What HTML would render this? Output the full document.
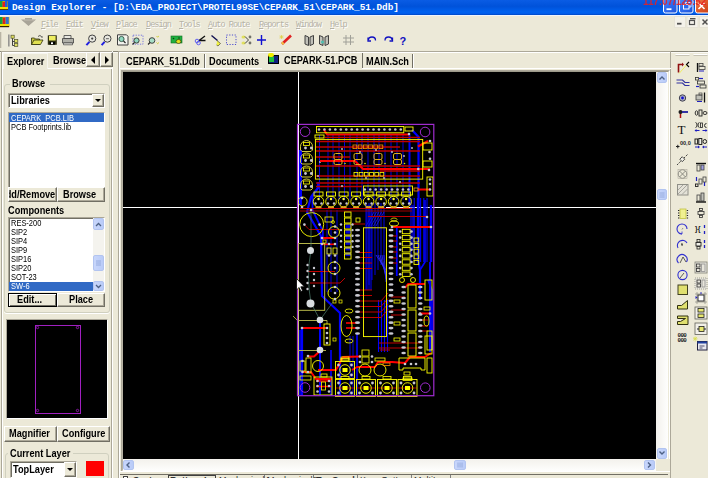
<!DOCTYPE html>
<html><head><meta charset="utf-8">
<style>
*{box-sizing:border-box}
body{margin:0;width:708px;height:478px;overflow:hidden;background:#ECE9D8;position:relative;font-family:"Liberation Sans",sans-serif;font-size:11px;color:#000}
.a{position:absolute}
.title{left:0;top:0;width:708px;height:16px;background:linear-gradient(#0a5ce4,#0052da 40%,#0062f0 75%,#005ae8 87%,#0042b8 94%,#0042b8 94%,#f0f4fc 94%);}
.ttxt{left:12px;top:2px;font-family:"Liberation Mono",monospace;font-weight:bold;font-size:9.36px;color:#fff;white-space:pre;line-height:12px}
.mi{top:19.5px;font-family:"Liberation Mono",monospace;font-size:8.5px;letter-spacing:-0.95px;color:#b5b2a6;text-shadow:1px 1px 0 #fff;line-height:11px;white-space:pre}
.b3{background:#ECE9D8;border:1px solid;border-color:#fff #716f64 #716f64 #fff;box-shadow:inset -1px -1px 0 #aca899}
.sk{background:#fff;border:1px solid;border-color:#aca899 #fff #fff #aca899;box-shadow:inset 1px 1px 0 #716f64}
.t{position:absolute;white-space:pre;transform-origin:0 0;line-height:12px}
.b10{font-weight:bold;font-size:10px;transform:scaleX(.92)}
.r9{font-size:9px;transform:scaleX(.83)}
.r10{font-size:10px;transform:scaleX(.93)}
.grp{position:absolute;border:1px solid #d0d0bf;border-radius:3px}
.xb{position:absolute;background:linear-gradient(90deg,#c8d6fb,#b9cbf8);border:1px solid #b2c4f0;border-radius:2px}
</style></head><body>
<!-- title bar -->
<div class="a title"></div>
<div class="a ttxt">Design Explorer - [D:\EDA_PROJECT\PROTEL99SE\CEPARK_51\CEPARK_51.Ddb]</div>

<!-- menu -->
<div class="a mi" style="left:41px"><u>F</u>ile</div>
<div class="a mi" style="left:66px"><u>E</u>dit</div>
<div class="a mi" style="left:91px"><u>V</u>iew</div>
<div class="a mi" style="left:116px"><u>P</u>lace</div>
<div class="a mi" style="left:146px"><u>D</u>esign</div>
<div class="a mi" style="left:179px"><u>T</u>ools</div>
<div class="a mi" style="left:208px"><u>A</u>uto Route</div>
<div class="a mi" style="left:259px"><u>R</u>eports</div>
<div class="a mi" style="left:296px"><u>W</u>indow</div>
<div class="a mi" style="left:330px"><u>H</u>elp</div>

<!--ICONS--><svg class="a" style="left:0;top:0" width="708" height="51"><rect x="0" y="1" width="8" height="9" fill="#d0a000"/><rect x="0" y="1" width="2.5" height="7" fill="#10a040"/><rect x="2.5" y="2" width="2.5" height="6" fill="#e02020"/><rect x="5" y="1" width="2.5" height="7" fill="#2060d0"/><rect x="0" y="7" width="8" height="2" fill="#f0e000"/><rect x="0" y="9" width="8" height="1" fill="#604000"/><rect x="0" y="17" width="9.5" height="10" fill="#e0c000"/><rect x="0" y="17" width="2.6" height="7" fill="#10a040"/><rect x="2.8" y="17.5" width="2.6" height="7" fill="#e02020"/><rect x="5.6" y="17" width="3.2" height="7" fill="#3070d0"/><rect x="0" y="24" width="9" height="2" fill="#f0e000"/><rect x="0" y="26" width="9" height="1.2" fill="#302000"/><path d="M21,19.5 h4 v-1.5 h7 v1.5 h4 l-7.5,6.5 z" fill="#a8a498"/><path d="M24,20 h10" stroke="#c8c4b8" stroke-width="0.8"/><defs><linearGradient id="bl" x1="0" y1="0" x2="1" y2="1"><stop offset="0" stop-color="#5a8ef5"/><stop offset=".5" stop-color="#2d6af0"/><stop offset="1" stop-color="#1e55d8"/></linearGradient><linearGradient id="rd" x1="0" y1="0" x2="1" y2="1"><stop offset="0" stop-color="#f08a60"/><stop offset=".5" stop-color="#e05a2a"/><stop offset="1" stop-color="#c84018"/></linearGradient></defs><path d="M663.5,-3 v14 q0,2 2,2 h9.5 q2,0 2,-2 v-14" fill="url(#bl)" stroke="#fff" stroke-width="1"/><rect x="666.5" y="8.3" width="5" height="1.8" fill="#fff"/><path d="M679.5,-3 v14 q0,2 2,2 h9.5 q2,0 2,-2 v-14" fill="url(#bl)" stroke="#fff" stroke-width="1"/><rect x="683.5" y="4.5" width="5.5" height="4.5" fill="none" stroke="#fff" stroke-width="1"/><path d="M685.5,4.5 v-2 h5.5 v4.5 h-2" fill="none" stroke="#fff" stroke-width="0.8"/><path d="M695.5,-3 v14 q0,2 2,2 h12 v-16" fill="url(#rd)" stroke="#fff" stroke-width="1"/><path d="M698.5,3 l6,6 M704.5,3 l-6,6" stroke="#fff" stroke-width="1.6"/><text x="643" y="4.5" font-family="Liberation Sans" font-weight="bold" font-size="10" fill="#e82020" letter-spacing="-0.1" opacity="0.85">117:07/128:52</text><rect x="674.5" y="16.5" width="11" height="11" fill="#f4f2ea" stroke="#e6e3d6" stroke-width="1"/><rect x="677" y="22.8" width="4.5" height="1.8" fill="#505050"/><rect x="687" y="16.5" width="11" height="11" fill="#f4f2ea" stroke="#e6e3d6" stroke-width="1"/><rect x="689.5" y="20.5" width="5" height="4" fill="none" stroke="#505050" stroke-width="1.2"/><rect x="690" y="18" width="5.5" height="1.4" fill="#505050"/><rect x="699.5" y="16.5" width="10" height="11" fill="#f4f2ea" stroke="#e6e3d6" stroke-width="1"/><path d="M702.5,19.5 l5,5 M707.5,19.5 l-5,5" stroke="#505050" stroke-width="1.5"/><rect x="0" y="32" width="1.3" height="16" fill="#b8b4a4"/><rect x="8.2" y="34.5" width="1.3" height="12" fill="#808080"/><path d="M12.5,38 v7.5 h3.5 M12.5,41.5 h3.5" stroke="#303030" stroke-width="0.9" fill="none"/><rect x="11" y="35.2" width="3.2" height="3" fill="#e0e060" stroke="#505030" stroke-width="0.7"/><rect x="14.6" y="39.6" width="3.2" height="3" fill="#e0e060" stroke="#505030" stroke-width="0.7"/><rect x="14.6" y="43.6" width="3.2" height="2.8" fill="#e0e060" stroke="#505030" stroke-width="0.7"/><path d="M31.5,38 h3 l1,1 h4 v5.5 h-8 z" fill="#c8c840" stroke="#303010" stroke-width="0.8"/><path d="M31.5,44.5 l2.5,-4.5 h9 l-2.5,4.5 z" fill="#e0e050" stroke="#303010" stroke-width="0.8"/><path d="M38,36.5 q2,-2 3.5,0" stroke="#303030" stroke-width="0.8" fill="none"/><circle cx="42" cy="37" r=".7" fill="#303030"/><rect x="47.8" y="35.3" width="9" height="9.5" fill="#303010"/><rect x="49" y="36" width="6.6" height="4.5" fill="#eeee60"/><rect x="49.5" y="41.8" width="5.5" height="2.8" fill="#000"/><rect x="51" y="42.3" width="2" height="1.8" fill="#fff"/><path d="M64,35.5 h7 v3 h-7 z" fill="#e8e8e0" stroke="#404040" stroke-width="0.8"/><path d="M62.5,38.5 h11 v4.5 h-11 z" fill="#b0b0a8" stroke="#404040" stroke-width="0.8"/><path d="M63.5,43 h9 v1.8 h-9 z" fill="#f0f0e8" stroke="#404040" stroke-width="0.7"/><circle cx="92.2" cy="38.6" r="3.6" fill="#e8e8e0" stroke="#404040" stroke-width="1"/><line x1="89.4" y1="41.8" x2="86.4" y2="45.2" stroke="#2020e0" stroke-width="2"/><circle cx="92.2" cy="38.6" r="1.1" fill="#404040"/><circle cx="107.4" cy="38.6" r="3.6" fill="#e8e8e0" stroke="#404040" stroke-width="1"/><line x1="104.60000000000001" y1="41.8" x2="101.60000000000001" y2="45.2" stroke="#2020e0" stroke-width="2"/><rect x="105.9" y="38.2" width="3" height="1" fill="#606060"/><path d="M117.5,34.8 h9 l1.5,1.5 v8.7 h-10.5 z" fill="#f4f4ee" stroke="#404040" stroke-width="1"/><circle cx="121.5" cy="39" r="2.6" fill="#90d8c0" stroke="#305040" stroke-width="0.9"/><line x1="123.5" y1="41" x2="125.5" y2="43" stroke="#202020" stroke-width="1.1"/><rect x="133" y="35.2" width="10" height="9" fill="none" stroke="#7070e0" stroke-width="0.9" stroke-dasharray="1.3,1.3"/><circle cx="136.5" cy="40.5" r="2.6" fill="#90d8c0" stroke="#303030" stroke-width="0.9"/><line x1="134.5" y1="42.5" x2="132.5" y2="44.5" stroke="#202020" stroke-width="1.1"/><circle cx="152" cy="40.5" r="2.8" fill="#a8e0c8" stroke="#303030" stroke-width="0.9"/><line x1="150" y1="42.5" x2="148" y2="44.5" stroke="#202020" stroke-width="1.1"/><path d="M156.5,36 l1.2,1.2 l1.2,-1.2 M156.5,42.5 l1.2,1.2 l1.2,-1.2" stroke="#d0d030" stroke-width="1" fill="none"/><rect x="171" y="36" width="11" height="7" fill="#20b040" stroke="#107020" stroke-width="0.6"/><circle cx="173.5" cy="38.5" r=".8" fill="#084010"/><circle cx="179" cy="38" r=".8" fill="#084010"/><ellipse cx="178.5" cy="41.5" rx="2.5" ry="2" fill="#e0e020" stroke="#303000" stroke-width="0.6"/><path d="M199,40.5 l6,-4.5 M199,40.5 h6.5" stroke="#101010" stroke-width="1.3"/><circle cx="197" cy="41" r="1.8" fill="none" stroke="#6060f0" stroke-width="1"/><circle cx="198.5" cy="43" r="1.8" fill="none" stroke="#6060f0" stroke-width="1"/><path d="M211.5,35.5 l6,5" stroke="#101050" stroke-width="1.4"/><path d="M217,40.5 l3.5,3 l-2.5,2.5 l-1.5,-1" stroke="#303030" stroke-width=".6" fill="#f0f040"/><rect x="226.5" y="35" width="9.5" height="9.5" fill="none" stroke="#5050d0" stroke-width="1" stroke-dasharray="1.2,1.5"/><ellipse cx="243.5" cy="37" rx="2" ry="1.6" fill="#e0e060"/><ellipse cx="243.5" cy="43" rx="2" ry="1.6" fill="#e0e060"/><path d="M245,36.5 l3.5,3.5 l-3.5,3.5" stroke="#303030" stroke-width=".9" fill="none"/><circle cx="250" cy="37" r="1.4" fill="#707068"/><circle cx="250" cy="43" r="1.4" fill="#707068"/><path d="M261.5,35 v10 M257,40 h9" stroke="#1010d0" stroke-width="1.4"/><path d="M282,44 l9,-8.5" stroke="#e02020" stroke-width="2.6"/><path d="M282,44 l1.5,-1.5" stroke="#f0c040" stroke-width="2.6"/><path d="M279.5,37 h4 M281.5,35 v4 M280,35.5 l3,3 M283,35.5 l-3,3" stroke="#e0d040" stroke-width=".7"/><path d="M305,35.5 l3.5,1.5 l0,8.5 l-3.5,-1.5 z M313.5,35.5 l-3.5,1.5 l0,8.5 l3.5,-1.5 z" fill="#c0c0b8" stroke="#303030" stroke-width=".9"/><path d="M319.5,35.5 l3.5,1.5 l0,8.5 l-3.5,-1.5 z M328.5,35.5 l-3.5,1.5 l0,8.5 l3.5,-1.5 z" fill="#c0c0b8" stroke="#303030" stroke-width=".9"/><circle cx="322.5" cy="42" r="1.6" fill="#50c0b0"/><path d="M346,35 v10 M350.5,35 v10 M343,38 h11 M343,42 h11" stroke="#a0a098" stroke-width="1"/><path d="M368.5,40 q0,-3 3.5,-3 q3.5,0 3.5,3.5 M368,37.5 v3.5 h3" stroke="#1010c0" stroke-width="1.3" fill="none"/><path d="M392,40 q0,-3 -3.5,-3 q-3.5,0 -3.5,3.5 M392.5,37.5 v3.5 h-3" stroke="#1010c0" stroke-width="1.3" fill="none"/><text x="399.5" y="45" font-family="Liberation Sans" font-weight="bold" font-size="11" fill="#1010c0">?</text></svg><!--/ICONS-->
<!-- toolbar bottom line -->
<div class="a" style="left:0;top:51px;width:708px;height:1px;background:#8a8778"></div>
<div class="a" style="left:0;top:52px;width:708px;height:1px;background:#fbfaf6"></div>

<!-- ============ left panel ============ -->
<div class="a" style="left:1px;top:51px;width:112px;height:427px;border-left:1px solid #aca899;border-top:1px solid #aca899;box-shadow:inset 1px 1px 0 #fff"></div>
<div class="a" style="left:111px;top:68px;width:1px;height:410px;background:#aca899"></div>
<div class="a" style="left:112px;top:51px;width:1px;height:427px;background:#fff"></div>
<!-- tabs -->
<div class="a" style="left:3px;top:53px;width:45px;height:16px;border:1px solid #f6f5ef;border-bottom:none"></div>
<div class="t b10" style="left:7px;top:56px">Explorer</div>
<div class="t b10" style="left:53px;top:55px;width:36px;overflow:hidden">Browse</div>
<div class="a" style="left:48px;top:68px;width:64px;height:1px;background:#fff"></div>
<div class="a b3" style="left:86px;top:52px;width:14px;height:15px"></div>
<div class="a b3" style="left:100px;top:52px;width:13px;height:15px"></div>
<div class="a" style="left:91px;top:56px;width:0;height:0;border-top:4px solid transparent;border-bottom:4px solid transparent;border-right:4px solid #000"></div>
<div class="a" style="left:105px;top:56px;width:0;height:0;border-top:4px solid transparent;border-bottom:4px solid transparent;border-left:4px solid #000"></div>

<!-- Browse group -->
<div class="grp" style="left:4px;top:84px;width:106px;height:229px;border-color:#d0d0bf;box-shadow:0 1px 0 #fff"></div>
<div class="a" style="left:10px;top:78px;width:40px;height:10px;background:#ECE9D8"></div>
<div class="t b10" style="left:12px;top:78px">Browse</div>
<div class="a sk" style="left:8px;top:93px;width:97px;height:15px"></div>
<div class="t b10" style="left:11px;top:95px">Libraries</div>
<div class="a b3" style="left:92px;top:94px;width:12px;height:13px"></div>
<div class="a" style="left:95px;top:99px;width:0;height:0;border-left:3px solid transparent;border-right:3px solid transparent;border-top:3px solid #000"></div>
<div class="a sk" style="left:8px;top:112px;width:97px;height:76px"></div>
<div class="a" style="left:9px;top:113px;width:95px;height:9px;background:#316ac5"></div>
<div class="t r9" style="left:11px;top:111.5px;color:#fff">CEPARK_PCB.LIB</div>
<div class="t r9" style="left:11px;top:120.5px">PCB Footprints.lib</div>
<div class="a b3" style="left:8px;top:187px;width:49px;height:15px;overflow:hidden"><div class="t b10" style="left:-10.5px;top:1px">Add/Remove</div></div>
<div class="a b3" style="left:57px;top:187px;width:48px;height:15px"></div>
<div class="t b10" style="left:63px;top:189px">Browse</div>

<!-- Components -->
<div class="t b10" style="left:8px;top:205px">Components</div>
<div class="a sk" style="left:8px;top:217px;width:97px;height:75px"></div>
<div class="t r9" style="left:11px;top:217px">RES-200</div>
<div class="t r9" style="left:11px;top:226px">SIP2</div>
<div class="t r9" style="left:11px;top:235px">SIP4</div>
<div class="t r9" style="left:11px;top:244px">SIP9</div>
<div class="t r9" style="left:11px;top:253px">SIP16</div>
<div class="t r9" style="left:11px;top:262px">SIP20</div>
<div class="t r9" style="left:11px;top:271px">SOT-23</div>
<div class="a" style="left:9px;top:282px;width:84px;height:9px;background:#316ac5"></div>
<div class="t r9" style="left:11px;top:280px;color:#fff">SW-6</div>
<div class="a" style="left:93px;top:218px;width:11px;height:73px;background:#f4f3ee"></div>
<div class="xb" style="left:93px;top:218px;width:11px;height:12px"></div>
<div class="xb" style="left:93px;top:255px;width:11px;height:16px"></div>
<div class="xb" style="left:93px;top:281px;width:11px;height:10px"></div>
<!-- buttons -->
<div class="a b3" style="left:8px;top:293px;width:49px;height:14px;border:1px solid #000;box-shadow:inset 1px 1px 0 #fff,inset -1px -1px 0 #716f64"></div>
<div class="t b10" style="left:17px;top:294px">Edit...</div>
<div class="a b3" style="left:57px;top:293px;width:48px;height:14px"></div>
<div class="t b10" style="left:69px;top:294px">Place</div>

<!-- separator + mini view -->

<div class="a" style="left:6px;top:319px;width:102px;height:100px;border:1px solid;border-color:#aca899 #fff #fff #aca899;background:#000"></div>
<svg class="a" style="left:0;top:0" width="112" height="478">
<rect x="35.5" y="325.5" width="45" height="88" fill="none" stroke="#a020c0" stroke-width="1"/>
<circle cx="37.5" cy="327.5" r="1.2" fill="none" stroke="#a020c0" stroke-width=".8"/>
<circle cx="77.5" cy="327.5" r="1.2" fill="none" stroke="#a020c0" stroke-width=".8"/>
<circle cx="37.5" cy="410.5" r="1.2" fill="none" stroke="#a020c0" stroke-width=".8"/>
<circle cx="77.5" cy="410.5" r="1.2" fill="none" stroke="#a020c0" stroke-width=".8"/>
</svg>
<div class="a b3" style="left:4px;top:426px;width:53px;height:16px"></div>
<div class="t b10" style="left:9px;top:428px">Magnifier</div>
<div class="a b3" style="left:57px;top:426px;width:53px;height:16px"></div>
<div class="t b10" style="left:62px;top:428px">Configure</div>
<!-- current layer -->
<div class="grp" style="left:5px;top:453px;width:104px;height:40px"></div>
<div class="a" style="left:8px;top:447px;width:65px;height:10px;background:#ECE9D8"></div>
<div class="t b10" style="left:10px;top:448px">Current Layer</div>
<div class="a sk" style="left:10px;top:461px;width:67px;height:17px"></div>
<div class="t b10" style="left:13px;top:464px">TopLayer</div>
<div class="a b3" style="left:64px;top:462px;width:12px;height:15px"></div>
<div class="a" style="left:67px;top:468px;width:0;height:0;border-left:3px solid transparent;border-right:3px solid transparent;border-top:3px solid #000"></div>
<div class="a" style="left:86px;top:461px;width:18px;height:15px;background:#f00"></div>

<!-- ============ document frame ============ -->
<div class="a" style="left:118px;top:51px;width:553px;height:427px;border-left:1px solid #aca899;border-top:1px solid #aca899"></div>
<div class="a" style="left:119px;top:52px;width:1px;height:426px;background:#fff"></div>
<div class="a" style="left:120px;top:52px;width:551px;height:1px;background:#fff"></div>
<div class="a" style="left:670px;top:51px;width:1px;height:427px;background:#aca899"></div>
<!-- tabs -->
<div class="t b10" style="left:126px;top:56px">CEPARK_51.Ddb</div>
<div class="a" style="left:204px;top:54px;width:1px;height:14px;background:#716f64"></div>
<div class="a" style="left:205px;top:54px;width:1px;height:14px;background:#fff"></div>
<div class="t b10" style="left:209px;top:56px">Documents</div>
<div class="a" style="left:120px;top:68px;width:142px;height:1px;background:#fff"></div>
<div class="a" style="left:362px;top:68px;width:309px;height:1px;background:#fff"></div>
<div class="t b10" style="left:284px;top:54.5px">CEPARK-51.PCB</div>
<div class="a" style="left:362px;top:53px;width:1px;height:15px;background:#716f64"></div>
<div class="t b10" style="left:366px;top:56px">MAIN.Sch</div>
<div class="a" style="left:412px;top:54px;width:1px;height:14px;background:#716f64"></div>
<div class="a" style="left:413px;top:54px;width:1px;height:14px;background:#fff"></div>
<!-- pcb tab icon -->
<div class="a" style="left:268px;top:55px;width:11px;height:9px;background:#102080;border:1px solid #000"></div>
<div class="a" style="left:269px;top:57px;width:5px;height:5px;background:#20c040"></div>
<div class="a" style="left:268px;top:53px;width:6px;height:4px;background:#f0f000;border-radius:2px"></div>

<!-- canvas frame -->
<div class="a" style="left:121px;top:70px;width:549px;height:402px;border:1px solid;border-color:#aca899 #fff #fff #aca899"></div>
<div class="a" style="left:122px;top:71px;width:547px;height:400px;border:1px solid;border-color:#9d9a8a #ECE9D8 #ECE9D8 #b8b4a4"></div>
<div class="a" style="left:123px;top:72px;width:533px;height:387px;background:#000;overflow:hidden" id="cv"></div>
<!--PCB--><svg class="a" style="left:123px;top:72px" width="533" height="387" viewBox="123 72 533 387"><line x1="298.5" y1="72" x2="298.5" y2="459" stroke="#fff" stroke-width="1"/><line x1="123" y1="207.5" x2="298" y2="207.5" stroke="#fff" stroke-width="1"/><line x1="386" y1="207.5" x2="656" y2="207.5" stroke="#fff" stroke-width="1"/><g><polyline points="366,203 366,290" fill="none" stroke="#0000ff" stroke-width="0.9" stroke-linejoin="round"/><polyline points="369,203 369,285" fill="none" stroke="#0000ff" stroke-width="0.9" stroke-linejoin="round"/><polyline points="372,203 372,280" fill="none" stroke="#0000ff" stroke-width="0.9" stroke-linejoin="round"/><polyline points="375,203 375,275" fill="none" stroke="#0000ff" stroke-width="0.9" stroke-linejoin="round"/><polyline points="378,203 378,270" fill="none" stroke="#0000ff" stroke-width="0.9" stroke-linejoin="round"/><polyline points="381,203 381,265" fill="none" stroke="#0000ff" stroke-width="0.9" stroke-linejoin="round"/><polyline points="384,203 384,260" fill="none" stroke="#0000ff" stroke-width="0.9" stroke-linejoin="round"/><line x1="411.0" y1="198" x2="411.0" y2="262" stroke="#0000ff" stroke-width="1.1"/><line x1="414.2" y1="198" x2="414.2" y2="262" stroke="#0000ff" stroke-width="1.1"/><line x1="417.4" y1="198" x2="417.4" y2="262" stroke="#0000ff" stroke-width="1.1"/><line x1="420.6" y1="198" x2="420.6" y2="262" stroke="#0000ff" stroke-width="1.1"/><line x1="423.8" y1="198" x2="423.8" y2="262" stroke="#0000ff" stroke-width="1.1"/><line x1="427.0" y1="198" x2="427.0" y2="262" stroke="#0000ff" stroke-width="1.1"/><line x1="378.5" y1="300" x2="378.5" y2="352" stroke="#0000ff" stroke-width="1.1"/><line x1="381.5" y1="300" x2="381.5" y2="352" stroke="#0000ff" stroke-width="1.1"/><line x1="384.5" y1="300" x2="384.5" y2="352" stroke="#0000ff" stroke-width="1.1"/><line x1="387.5" y1="300" x2="387.5" y2="352" stroke="#0000ff" stroke-width="1.1"/><polyline points="384.0,212 376.0,226" fill="none" stroke="#2020e0" stroke-width="0.8" stroke-linejoin="round"/><polyline points="381.5,212 373.5,226" fill="none" stroke="#2020e0" stroke-width="0.8" stroke-linejoin="round"/><polyline points="379.0,212 371.0,226" fill="none" stroke="#2020e0" stroke-width="0.8" stroke-linejoin="round"/><polyline points="376.5,212 368.5,226" fill="none" stroke="#2020e0" stroke-width="0.8" stroke-linejoin="round"/><polyline points="374.0,212 366.0,226" fill="none" stroke="#2020e0" stroke-width="0.8" stroke-linejoin="round"/><line x1="319.5" y1="135" x2="319.5" y2="200" stroke="#0000e0" stroke-width="1"/><line x1="328" y1="135" x2="328" y2="200" stroke="#0000e0" stroke-width="1"/><line x1="333" y1="135" x2="333" y2="200" stroke="#0000e0" stroke-width="1"/><line x1="339" y1="135" x2="339" y2="200" stroke="#0000e0" stroke-width="1"/><line x1="344.5" y1="135" x2="344.5" y2="200" stroke="#0000e0" stroke-width="1"/><line x1="350" y1="135" x2="350" y2="200" stroke="#0000e0" stroke-width="1"/><line x1="357" y1="135" x2="357" y2="200" stroke="#0000e0" stroke-width="1"/><line x1="362" y1="135" x2="362" y2="200" stroke="#0000e0" stroke-width="1"/><line x1="368" y1="135" x2="368" y2="200" stroke="#0000e0" stroke-width="1"/><line x1="374" y1="135" x2="374" y2="200" stroke="#0000e0" stroke-width="1"/><line x1="379" y1="135" x2="379" y2="200" stroke="#0000e0" stroke-width="1"/><line x1="385" y1="135" x2="385" y2="200" stroke="#0000e0" stroke-width="1"/><line x1="391" y1="135" x2="391" y2="200" stroke="#0000e0" stroke-width="1"/><line x1="397" y1="135" x2="397" y2="200" stroke="#0000e0" stroke-width="1"/><line x1="403" y1="135" x2="403" y2="200" stroke="#0000e0" stroke-width="1"/><line x1="300.5" y1="150" x2="300.5" y2="205" stroke="#0000ff" stroke-width="3"/><polyline points="412,130 418.5,137 418.5,262 420,270 420,300" fill="none" stroke="#0000ff" stroke-width="2.2" stroke-linejoin="round"/><line x1="409.5" y1="135" x2="409.5" y2="205" stroke="#0000ff" stroke-width="2"/><line x1="431" y1="205" x2="431" y2="262" stroke="#0000ff" stroke-width="2.4"/><polyline points="425,200 425,262 420,270" fill="none" stroke="#0000ff" stroke-width="1.6" stroke-linejoin="round"/><line x1="413" y1="205" x2="413" y2="250" stroke="#0000ff" stroke-width="1.2"/><line x1="396.8" y1="227" x2="396.8" y2="276" stroke="#0000ff" stroke-width="1.8"/><polyline points="318,182 318,188 311,197 307,212 321,236 322,296 340,313 340,395" fill="none" stroke="#0000ff" stroke-width="2.2" stroke-linejoin="round"/><polyline points="312.5,196 312.5,210 322.8,231 322.8,240" fill="none" stroke="#0000ff" stroke-width="1.8" stroke-linejoin="round"/><rect x="345.5" y="224.5" width="5.5" height="3.5" fill="#0000d0"/><rect x="345.5" y="230.1" width="5.5" height="3.5" fill="#0000d0"/><rect x="345.5" y="235.7" width="5.5" height="3.5" fill="#0000d0"/><rect x="345.5" y="241.3" width="5.5" height="3.5" fill="#0000d0"/><rect x="345.5" y="246.9" width="5.5" height="3.5" fill="#0000d0"/><rect x="345.5" y="252.5" width="5.5" height="3.5" fill="#0000d0"/><line x1="302" y1="328" x2="302" y2="395" stroke="#0000ff" stroke-width="2.2"/><line x1="320" y1="320" x2="320" y2="395" stroke="#0000ff" stroke-width="2"/><line x1="331" y1="350" x2="331" y2="395" stroke="#0000ff" stroke-width="1.6"/><line x1="357" y1="333" x2="357" y2="395" stroke="#0000ff" stroke-width="1.6"/><polyline points="428,280 432,290 432,350" fill="none" stroke="#0000ff" stroke-width="1.8" stroke-linejoin="round"/><polyline points="367,290 367,205" fill="none" stroke="#0000ff" stroke-width="1" stroke-linejoin="round"/><polyline points="369,290 369,205" fill="none" stroke="#0000ff" stroke-width="1" stroke-linejoin="round"/><polyline points="371,290 371,205" fill="none" stroke="#0000ff" stroke-width="1" stroke-linejoin="round"/><polyline points="376,255 386,270" fill="none" stroke="#3030ff" stroke-width="0.8" stroke-linejoin="round"/><polyline points="378,255 386,273" fill="none" stroke="#3030ff" stroke-width="0.8" stroke-linejoin="round"/><polyline points="380,255 386,276" fill="none" stroke="#3030ff" stroke-width="0.8" stroke-linejoin="round"/><polyline points="382,255 386,279" fill="none" stroke="#3030ff" stroke-width="0.8" stroke-linejoin="round"/><polyline points="384,255 386,282" fill="none" stroke="#3030ff" stroke-width="0.8" stroke-linejoin="round"/><line x1="430" y1="262" x2="430" y2="352" stroke="#0000ff" stroke-width="2"/><line x1="327" y1="210" x2="327" y2="292" stroke="#0000e0" stroke-width="1"/><line x1="331" y1="210" x2="331" y2="292" stroke="#0000e0" stroke-width="1"/><line x1="337" y1="210" x2="337" y2="292" stroke="#0000e0" stroke-width="1"/><line x1="350" y1="336" x2="350" y2="395" stroke="#0000e0" stroke-width="1"/><line x1="353" y1="336" x2="353" y2="395" stroke="#0000e0" stroke-width="1"/><line x1="300" y1="330" x2="300" y2="395" stroke="#0000ff" stroke-width="1.5"/><polyline points="323.8,129.5 327,134.5 409,134.5" fill="none" stroke="#ff0000" stroke-width="2" stroke-linejoin="round"/><line x1="325" y1="137.3" x2="420" y2="137.3" stroke="#c00000" stroke-width="1.3"/><line x1="316" y1="141.5" x2="420" y2="141.5" stroke="#c00000" stroke-width="1.3"/><line x1="316" y1="147" x2="400" y2="147" stroke="#c00000" stroke-width="1.3"/><line x1="316" y1="151" x2="420" y2="151" stroke="#c00000" stroke-width="1.3"/><line x1="316" y1="157" x2="350" y2="157" stroke="#c00000" stroke-width="1.3"/><line x1="316" y1="166" x2="420" y2="166" stroke="#c00000" stroke-width="1.3"/><line x1="380" y1="171" x2="420" y2="171" stroke="#c00000" stroke-width="1.3"/><line x1="316" y1="176" x2="420" y2="176" stroke="#c00000" stroke-width="1.3"/><line x1="316" y1="183" x2="420" y2="183" stroke="#c00000" stroke-width="1.3"/><line x1="316" y1="186.5" x2="362" y2="186.5" stroke="#c00000" stroke-width="1.3"/><circle cx="320" cy="162" r="0.9" fill="#c8c8d0"/><circle cx="342" cy="149" r="0.9" fill="#c8c8d0"/><circle cx="318" cy="176" r="0.9" fill="#c8c8d0"/><circle cx="360" cy="152" r="0.9" fill="#c8c8d0"/><circle cx="376" cy="150" r="0.9" fill="#c8c8d0"/><circle cx="392" cy="152" r="0.9" fill="#c8c8d0"/><circle cx="404" cy="156" r="0.9" fill="#c8c8d0"/><circle cx="412" cy="148" r="0.9" fill="#c8c8d0"/><circle cx="366" cy="178" r="0.9" fill="#c8c8d0"/><circle cx="384" cy="178" r="0.9" fill="#c8c8d0"/><circle cx="400" cy="182" r="0.9" fill="#c8c8d0"/><circle cx="342" cy="186" r="0.9" fill="#c8c8d0"/><polyline points="320,161 355,161 363,169 430,169" fill="none" stroke="#ff0000" stroke-width="2" stroke-linejoin="round"/><polyline points="418,146.5 428,141" fill="none" stroke="#ff0000" stroke-width="2" stroke-linejoin="round"/><line x1="418" y1="189.5" x2="430" y2="189.5" stroke="#ff0000" stroke-width="2"/><line x1="300" y1="208.5" x2="412" y2="208.5" stroke="#c00000" stroke-width="1.2"/><line x1="300" y1="211" x2="412" y2="211" stroke="#a00000" stroke-width="1"/><line x1="368" y1="216.5" x2="427" y2="216.5" stroke="#c00000" stroke-width="1"/><line x1="392" y1="227" x2="431" y2="227" stroke="#ff0000" stroke-width="2"/><line x1="352" y1="224" x2="365" y2="224" stroke="#c00000" stroke-width="1"/><polyline points="304.4,224.6 309,229.5 340,229.5" fill="none" stroke="#c00000" stroke-width="0.9" stroke-linejoin="round"/><line x1="358" y1="252.5" x2="372" y2="252.5" stroke="#c00000" stroke-width="1"/><line x1="358" y1="257.5" x2="372" y2="257.5" stroke="#c00000" stroke-width="1"/><line x1="358" y1="263" x2="372" y2="263" stroke="#c00000" stroke-width="1"/><line x1="358" y1="268.5" x2="372" y2="268.5" stroke="#c00000" stroke-width="1"/><line x1="358" y1="290" x2="372" y2="290" stroke="#c00000" stroke-width="1"/><line x1="358" y1="295.5" x2="372" y2="295.5" stroke="#c00000" stroke-width="1"/><polyline points="358,301 381,301 388,293" fill="none" stroke="#c00000" stroke-width="1" stroke-linejoin="round"/><polyline points="358,306.5 381,306.5 388,298.5" fill="none" stroke="#c00000" stroke-width="1" stroke-linejoin="round"/><polyline points="358,312 381,312 388,304" fill="none" stroke="#c00000" stroke-width="1" stroke-linejoin="round"/><polyline points="358,317.5 381,317.5 388,309.5" fill="none" stroke="#c00000" stroke-width="1" stroke-linejoin="round"/><line x1="322" y1="238" x2="335" y2="238" stroke="#ff0000" stroke-width="2"/><line x1="322" y1="244.3" x2="335" y2="244.3" stroke="#ff0000" stroke-width="1.6"/><line x1="307" y1="271.5" x2="335" y2="271.5" stroke="#c00000" stroke-width="1"/><polyline points="310,283 340,283 345,278" fill="none" stroke="#c00000" stroke-width="1" stroke-linejoin="round"/><line x1="302" y1="328" x2="327" y2="328" stroke="#ff0000" stroke-width="2"/><line x1="346" y1="323" x2="357" y2="323" stroke="#ff0000" stroke-width="1.6"/><line x1="346" y1="328" x2="357" y2="328" stroke="#ff0000" stroke-width="1.6"/><line x1="391" y1="297" x2="405" y2="297" stroke="#c00000" stroke-width="1"/><line x1="391" y1="310" x2="405" y2="310" stroke="#c00000" stroke-width="1"/><line x1="391" y1="315" x2="405" y2="315" stroke="#c00000" stroke-width="1"/><line x1="420" y1="320" x2="428" y2="320" stroke="#c00000" stroke-width="1"/><line x1="420" y1="326" x2="428" y2="326" stroke="#c00000" stroke-width="1"/><line x1="420" y1="331" x2="428" y2="331" stroke="#c00000" stroke-width="1"/><line x1="379" y1="343" x2="420" y2="343" stroke="#c00000" stroke-width="1"/><line x1="379" y1="348" x2="420" y2="348" stroke="#c00000" stroke-width="1"/><polyline points="405,288 408,284 425,284" fill="none" stroke="#ff0000" stroke-width="2" stroke-linejoin="round"/><line x1="420" y1="313.5" x2="430" y2="313.5" stroke="#ff0000" stroke-width="2"/><polyline points="308,356.5 314,356.5 320,351" fill="none" stroke="#ff0000" stroke-width="2" stroke-linejoin="round"/><polyline points="303,372 311,372 316,379 332,379" fill="none" stroke="#ff0000" stroke-width="2" stroke-linejoin="round"/><polyline points="318,370 336,370 343,357 360,356.5" fill="none" stroke="#ff0000" stroke-width="2" stroke-linejoin="round"/><polyline points="352,370 357,367 375,367 378,362 392,362 405,363 410,357 425,357 431,353" fill="none" stroke="#ff0000" stroke-width="2" stroke-linejoin="round"/><line x1="336" y1="388" x2="354" y2="388" stroke="#a00000" stroke-width="1"/><line x1="357" y1="388" x2="375" y2="388" stroke="#a00000" stroke-width="1"/><line x1="378" y1="388" x2="396" y2="388" stroke="#a00000" stroke-width="1"/><line x1="398.5" y1="388" x2="416.5" y2="388" stroke="#a00000" stroke-width="1"/><line x1="316" y1="381" x2="331" y2="381" stroke="#ff0000" stroke-width="1.5"/><line x1="316" y1="386.5" x2="331" y2="386.5" stroke="#ff0000" stroke-width="1.5"/><line x1="380" y1="350" x2="390" y2="350" stroke="#c00000" stroke-width="1"/><rect x="316.5" y="126.5" width="87.3" height="6.3" fill="none" stroke="#ffff00" stroke-width="0.9"/><rect x="405" y="127" width="8" height="4" fill="none" stroke="#ffff00" stroke-width="0.9"/><rect x="315" y="135" width="9" height="3" fill="none" stroke="#ffff00" stroke-width="0.9"/><rect x="315.4" y="139.4" width="107.3" height="39.7" fill="none" stroke="#ffff00" stroke-width="0.9"/><path d="M335.5,153.5 h5 q1.5,0 1.5,1.5 v3 q0,1.5 -1.5,1.5 h-5 q-1.5,0 -1.5,-1.5 v-3 q0,-1.5 1.5,-1.5 z M335.5,159.5 h5 q1.5,0 1.5,1.5 v2 q0,1.5 -1.5,1.5 h-5 q-1.5,0 -1.5,-1.5 v-2 q0,-1.5 1.5,-1.5 z" fill="none" stroke="#e0b020" stroke-width="1"/><circle cx="345" cy="163.5" r="0.8" fill="#e0e000"/><path d="M355.5,153.5 h5 q1.5,0 1.5,1.5 v3 q0,1.5 -1.5,1.5 h-5 q-1.5,0 -1.5,-1.5 v-3 q0,-1.5 1.5,-1.5 z M355.5,159.5 h5 q1.5,0 1.5,1.5 v2 q0,1.5 -1.5,1.5 h-5 q-1.5,0 -1.5,-1.5 v-2 q0,-1.5 1.5,-1.5 z" fill="none" stroke="#e0b020" stroke-width="1"/><circle cx="365" cy="163.5" r="0.8" fill="#e0e000"/><path d="M375.5,153.5 h5 q1.5,0 1.5,1.5 v3 q0,1.5 -1.5,1.5 h-5 q-1.5,0 -1.5,-1.5 v-3 q0,-1.5 1.5,-1.5 z M375.5,159.5 h5 q1.5,0 1.5,1.5 v2 q0,1.5 -1.5,1.5 h-5 q-1.5,0 -1.5,-1.5 v-2 q0,-1.5 1.5,-1.5 z" fill="none" stroke="#e0b020" stroke-width="1"/><circle cx="385" cy="163.5" r="0.8" fill="#e0e000"/><path d="M395.0,153.5 h5 q1.5,0 1.5,1.5 v3 q0,1.5 -1.5,1.5 h-5 q-1.5,0 -1.5,-1.5 v-3 q0,-1.5 1.5,-1.5 z M395.0,159.5 h5 q1.5,0 1.5,1.5 v2 q0,1.5 -1.5,1.5 h-5 q-1.5,0 -1.5,-1.5 v-2 q0,-1.5 1.5,-1.5 z" fill="none" stroke="#e0b020" stroke-width="1"/><circle cx="404.5" cy="163.5" r="0.8" fill="#e0e000"/><rect x="353.0" y="145" width="3.8" height="3.6" fill="none" stroke="#ff9000" stroke-width="0.8"/><rect x="354.0" y="172.5" width="3.8" height="3.6" fill="none" stroke="#ffff00" stroke-width="0.8"/><rect x="358.2" y="145" width="3.8" height="3.6" fill="none" stroke="#ff9000" stroke-width="0.8"/><rect x="359.2" y="172.5" width="3.8" height="3.6" fill="none" stroke="#ffff00" stroke-width="0.8"/><rect x="363.4" y="145" width="3.8" height="3.6" fill="none" stroke="#ff9000" stroke-width="0.8"/><rect x="364.4" y="172.5" width="3.8" height="3.6" fill="none" stroke="#ffff00" stroke-width="0.8"/><rect x="368.6" y="145" width="3.8" height="3.6" fill="none" stroke="#ff9000" stroke-width="0.8"/><rect x="369.6" y="172.5" width="3.8" height="3.6" fill="none" stroke="#ffff00" stroke-width="0.8"/><rect x="373.8" y="145" width="3.8" height="3.6" fill="none" stroke="#ff9000" stroke-width="0.8"/><rect x="374.8" y="172.5" width="3.8" height="3.6" fill="none" stroke="#ffff00" stroke-width="0.8"/><rect x="379.0" y="145" width="3.8" height="3.6" fill="none" stroke="#ff9000" stroke-width="0.8"/><rect x="380.0" y="172.5" width="3.8" height="3.6" fill="none" stroke="#ffff00" stroke-width="0.8"/><path d="M300.5,150 v-3.5 a6,6 0 0 1 12,0 v3.5 l-1.5,1.5 h-9 z" fill="none" stroke="#e8e040" stroke-width="0.9"/><rect x="303.5" y="142.5" width="6" height="3" fill="none" stroke="#ffff00" stroke-width="0.8"/><path d="M300.5,162.5 v-3.5 a6,6 0 0 1 12,0 v3.5 l-1.5,1.5 h-9 z" fill="none" stroke="#e8e040" stroke-width="0.9"/><rect x="303.5" y="155.0" width="6" height="3" fill="none" stroke="#ffff00" stroke-width="0.8"/><path d="M300.5,175.5 v-3.5 a6,6 0 0 1 12,0 v3.5 l-1.5,1.5 h-9 z" fill="none" stroke="#e8e040" stroke-width="0.9"/><rect x="303.5" y="168.0" width="6" height="3" fill="none" stroke="#ffff00" stroke-width="0.8"/><path d="M300.5,188.5 v-3.5 a6,6 0 0 1 12,0 v3.5 l-1.5,1.5 h-9 z" fill="none" stroke="#e8e040" stroke-width="0.9"/><rect x="303.5" y="181.0" width="6" height="3" fill="none" stroke="#ffff00" stroke-width="0.8"/><rect x="363.5" y="186" width="49" height="9" fill="none" stroke="#ffff00" stroke-width="0.9"/><rect x="414" y="188" width="4" height="3" fill="none" stroke="#ff9000" stroke-width="0.8"/><rect x="427" y="177" width="6" height="19" fill="none" stroke="#ffff00" stroke-width="0.9"/><rect x="423" y="143" width="9" height="7" fill="none" stroke="#ffff00" stroke-width="0.9"/><rect x="423" y="161" width="9" height="6" fill="none" stroke="#ffff00" stroke-width="0.9"/><rect x="314.0" y="192" width="9" height="4" fill="none" stroke="#ffff00" stroke-width="0.9"/><circle cx="318.5" cy="201.6" r="5.3" fill="none" stroke="#ffff00" stroke-width="0.9"/><circle cx="318.5" cy="199" r="1.2" fill="#ffff40"/><rect x="315.5" y="206.5" width="6" height="1.6" fill="#e0a020"/><rect x="326.5" y="192" width="9" height="4" fill="none" stroke="#ffff00" stroke-width="0.9"/><circle cx="331" cy="201.6" r="5.3" fill="none" stroke="#ffff00" stroke-width="0.9"/><circle cx="331" cy="199" r="1.2" fill="#ffff40"/><rect x="328" y="206.5" width="6" height="1.6" fill="#e0a020"/><rect x="339.1" y="192" width="9" height="4" fill="none" stroke="#ffff00" stroke-width="0.9"/><circle cx="343.6" cy="201.6" r="5.3" fill="none" stroke="#ffff00" stroke-width="0.9"/><circle cx="343.6" cy="199" r="1.2" fill="#ffff40"/><rect x="340.6" y="206.5" width="6" height="1.6" fill="#e0a020"/><rect x="351.6" y="192" width="9" height="4" fill="none" stroke="#ffff00" stroke-width="0.9"/><circle cx="356.1" cy="201.6" r="5.3" fill="none" stroke="#ffff00" stroke-width="0.9"/><circle cx="356.1" cy="199" r="1.2" fill="#ffff40"/><rect x="353.1" y="206.5" width="6" height="1.6" fill="#e0a020"/><rect x="364.1" y="192" width="9" height="4" fill="none" stroke="#ffff00" stroke-width="0.9"/><circle cx="368.6" cy="201.6" r="5.3" fill="none" stroke="#ffff00" stroke-width="0.9"/><circle cx="368.6" cy="199" r="1.2" fill="#ffff40"/><rect x="365.6" y="206.5" width="6" height="1.6" fill="#e0a020"/><rect x="376.6" y="192" width="9" height="4" fill="none" stroke="#ffff00" stroke-width="0.9"/><circle cx="381.1" cy="201.6" r="5.3" fill="none" stroke="#ffff00" stroke-width="0.9"/><circle cx="381.1" cy="199" r="1.2" fill="#ffff40"/><rect x="378.1" y="206.5" width="6" height="1.6" fill="#e0a020"/><rect x="389.1" y="192" width="9" height="4" fill="none" stroke="#ffff00" stroke-width="0.9"/><circle cx="393.6" cy="201.6" r="5.3" fill="none" stroke="#ffff00" stroke-width="0.9"/><circle cx="393.6" cy="199" r="1.2" fill="#ffff40"/><rect x="390.6" y="206.5" width="6" height="1.6" fill="#e0a020"/><rect x="401.6" y="192" width="9" height="4" fill="none" stroke="#ffff00" stroke-width="0.9"/><circle cx="406.1" cy="201.6" r="5.3" fill="none" stroke="#ffff00" stroke-width="0.9"/><circle cx="406.1" cy="199" r="1.2" fill="#ffff40"/><rect x="403.1" y="206.5" width="6" height="1.6" fill="#e0a020"/><circle cx="302.6" cy="201.5" r="4.5" fill="none" stroke="#ffff00" stroke-width="0.8"/><circle cx="311.7" cy="224.6" r="12" fill="none" stroke="#ffff00" stroke-width="0.9"/><rect x="298.5" y="243.5" width="26.2" height="66.8" fill="none" stroke="#c8c850" stroke-width="0.9"/><line x1="298.5" y1="244" x2="298.5" y2="396" stroke="#d0d060" stroke-width="0.9"/><polyline points="293,316 297.5,320.5" fill="none" stroke="#c0c050" stroke-width="0.8" stroke-linejoin="round"/><polyline points="297,320.5 327,320.5 327,324" fill="none" stroke="#c0c050" stroke-width="0.9" stroke-linejoin="round"/><line x1="297" y1="350.5" x2="326" y2="350.5" stroke="#c0c050" stroke-width="0.9"/><rect x="363.5" y="227.8" width="23" height="108.8" fill="none" stroke="#ffff00" stroke-width="0.9"/><rect x="408" y="285" width="8" height="23" fill="none" stroke="#ffff00" stroke-width="0.9"/><rect x="408" y="310" width="8" height="21" fill="none" stroke="#ffff00" stroke-width="0.9"/><rect x="408" y="333" width="8" height="23" fill="none" stroke="#ffff00" stroke-width="0.9"/><rect x="394" y="300" width="6" height="3" fill="none" stroke="#ffff00" stroke-width="0.8"/><rect x="394" y="322" width="6" height="3" fill="none" stroke="#ffff00" stroke-width="0.8"/><rect x="394" y="338" width="6" height="3" fill="none" stroke="#ffff00" stroke-width="0.8"/><rect x="425" y="280" width="7" height="20" fill="none" stroke="#ffff00" stroke-width="0.9"/><rect x="425" y="336" width="7" height="18" fill="none" stroke="#ffff00" stroke-width="0.9"/><rect x="344.5" y="212" width="6.5" height="5" fill="none" stroke="#ffff00" stroke-width="0.9"/><rect x="344.5" y="218" width="6.5" height="5" fill="none" stroke="#ffff00" stroke-width="0.9"/><rect x="344.5" y="224" width="6.5" height="5" fill="none" stroke="#ffff00" stroke-width="0.9"/><rect x="344.5" y="230" width="6.5" height="5" fill="none" stroke="#ffff00" stroke-width="0.9"/><rect x="344.5" y="236" width="6.5" height="5" fill="none" stroke="#ffff00" stroke-width="0.9"/><rect x="344.5" y="242" width="6.5" height="5" fill="none" stroke="#ffff00" stroke-width="0.9"/><rect x="344.5" y="248" width="6.5" height="5" fill="none" stroke="#ffff00" stroke-width="0.9"/><rect x="344.5" y="254" width="6.5" height="5" fill="none" stroke="#ffff00" stroke-width="0.9"/><rect x="402.3" y="229.3" width="7.8" height="4.4" fill="none" stroke="#ffff00" stroke-width="0.9"/><rect x="402.3" y="235.4" width="7.8" height="4.4" fill="none" stroke="#ffff00" stroke-width="0.9"/><rect x="402.3" y="241.5" width="7.8" height="4.4" fill="none" stroke="#ffff00" stroke-width="0.9"/><rect x="402.3" y="247.60000000000002" width="7.8" height="4.4" fill="none" stroke="#ffff00" stroke-width="0.9"/><rect x="402.3" y="253.70000000000002" width="7.8" height="4.4" fill="none" stroke="#ffff00" stroke-width="0.9"/><rect x="402.3" y="259.8" width="7.8" height="4.4" fill="none" stroke="#ffff00" stroke-width="0.9"/><rect x="402.3" y="265.9" width="7.8" height="4.4" fill="none" stroke="#ffff00" stroke-width="0.9"/><rect x="402.3" y="272.0" width="7.8" height="4.4" fill="none" stroke="#ffff00" stroke-width="0.9"/><rect x="414" y="238.0" width="4.7" height="4" fill="none" stroke="#ffff00" stroke-width="0.9"/><rect x="414" y="243.6" width="4.7" height="4" fill="none" stroke="#ffff00" stroke-width="0.9"/><rect x="414" y="249.2" width="4.7" height="4" fill="none" stroke="#ffff00" stroke-width="0.9"/><rect x="414" y="254.8" width="4.7" height="4" fill="none" stroke="#ffff00" stroke-width="0.9"/><rect x="414" y="260.4" width="4.7" height="4" fill="none" stroke="#ffff00" stroke-width="0.9"/><line x1="391" y1="236" x2="397" y2="236" stroke="#c00000" stroke-width="1"/><line x1="391" y1="241" x2="397" y2="241" stroke="#c00000" stroke-width="1"/><line x1="391" y1="247" x2="397" y2="247" stroke="#c00000" stroke-width="1"/><line x1="391" y1="252" x2="397" y2="252" stroke="#c00000" stroke-width="1"/><line x1="391" y1="258" x2="397" y2="258" stroke="#c00000" stroke-width="1"/><line x1="391" y1="263" x2="397" y2="263" stroke="#c00000" stroke-width="1"/><rect x="325" y="217" width="8" height="5" fill="none" stroke="#ffff00" stroke-width="0.8"/><circle cx="333" cy="222" r="1.5" fill="none" stroke="#ffff00" stroke-width="0.7"/><rect x="323" y="240" width="3" height="3" fill="none" stroke="#ffff00" stroke-width="0.7"/><rect x="327" y="248" width="4" height="6" fill="none" stroke="#ffff00" stroke-width="0.8"/><rect x="333" y="248" width="4" height="6" fill="none" stroke="#ffff00" stroke-width="0.8"/><rect x="356" y="218" width="4" height="4" fill="none" stroke="#ffff00" stroke-width="0.8"/><ellipse cx="394" cy="223.5" rx="4.5" ry="2.5" fill="none" stroke="#ffff00" stroke-width="0.9"/><ellipse cx="394" cy="219.5" rx="3" ry="1.5" fill="none" stroke="#ffff00" stroke-width="0.7"/><ellipse cx="346.5" cy="326" rx="5.5" ry="10.5" fill="none" stroke="#ffff00" stroke-width="0.9"/><ellipse cx="349" cy="311" rx="4" ry="2" fill="none" stroke="#ffff00" stroke-width="0.8"/><ellipse cx="349" cy="341" rx="4" ry="2" fill="none" stroke="#ffff00" stroke-width="0.8"/><ellipse cx="426.5" cy="321" rx="2.5" ry="5" fill="none" stroke="#ffff00" stroke-width="0.9"/><rect x="424" y="307" width="6" height="3" fill="none" stroke="#ffff00" stroke-width="0.8"/><circle cx="334" cy="232" r="5.5" fill="none" stroke="#ffff00" stroke-width="0.9"/><circle cx="334" cy="268" r="6" fill="none" stroke="#ffff00" stroke-width="0.9"/><circle cx="334" cy="293" r="6" fill="none" stroke="#ffff00" stroke-width="0.9"/><circle cx="318" cy="366" r="5.5" fill="none" stroke="#ffff00" stroke-width="0.9"/><circle cx="365" cy="370" r="6" fill="none" stroke="#ffff00" stroke-width="0.9"/><circle cx="380" cy="370" r="6" fill="none" stroke="#ffff00" stroke-width="0.9"/><circle cx="402" cy="280" r="2.5" fill="none" stroke="#ffff00" stroke-width="0.9"/><circle cx="413" cy="280" r="2.5" fill="none" stroke="#ffff00" stroke-width="0.9"/><rect x="324" y="324" width="6" height="21" fill="none" stroke="#ffff00" stroke-width="0.9"/><rect x="333" y="338" width="3" height="3" fill="none" stroke="#ffff00" stroke-width="0.7"/><rect x="333" y="300" width="3" height="3" fill="none" stroke="#ffff00" stroke-width="0.7"/><rect x="339" y="300" width="3" height="3" fill="none" stroke="#ffff00" stroke-width="0.7"/><rect x="300" y="361" width="5" height="10" fill="none" stroke="#ffff00" stroke-width="0.8"/><rect x="306" y="358" width="5" height="15" fill="none" stroke="#ffff00" stroke-width="0.8"/><rect x="300" y="376" width="11" height="4" fill="none" stroke="#ffff00" stroke-width="0.8"/><rect x="335.5" y="361.5" width="19" height="17" fill="none" stroke="#ffff00" stroke-width="0.9"/><circle cx="345" cy="370" r="5.3" fill="none" stroke="#ffff00" stroke-width="0.9"/><rect x="342.5" y="368" width="5" height="4" fill="#ffff00"/><rect x="341" y="358.5" width="8" height="2.5" fill="none" stroke="#ffff00" stroke-width="0.8"/><circle cx="338.5" cy="365" r="1.4" fill="#c8c8d0"/><circle cx="338.5" cy="375" r="1.4" fill="#c8c8d0"/><circle cx="351.5" cy="365" r="1.4" fill="#c8c8d0"/><circle cx="351.5" cy="375" r="1.4" fill="#c8c8d0"/><rect x="335.5" y="379.5" width="19" height="17" fill="none" stroke="#ffff00" stroke-width="0.9"/><circle cx="345" cy="388" r="5.3" fill="none" stroke="#ffff00" stroke-width="0.9"/><rect x="342.5" y="386" width="5" height="4" fill="#ffff00"/><rect x="341" y="376.5" width="8" height="2.5" fill="none" stroke="#ffff00" stroke-width="0.8"/><circle cx="338.5" cy="383" r="1.4" fill="#c8c8d0"/><circle cx="338.5" cy="393" r="1.4" fill="#c8c8d0"/><circle cx="351.5" cy="383" r="1.4" fill="#c8c8d0"/><circle cx="351.5" cy="393" r="1.4" fill="#c8c8d0"/><rect x="356.5" y="379.5" width="19" height="17" fill="none" stroke="#ffff00" stroke-width="0.9"/><circle cx="366" cy="388" r="5.3" fill="none" stroke="#ffff00" stroke-width="0.9"/><rect x="363.5" y="386" width="5" height="4" fill="#ffff00"/><rect x="362" y="376.5" width="8" height="2.5" fill="none" stroke="#ffff00" stroke-width="0.8"/><circle cx="359.5" cy="383" r="1.4" fill="#c8c8d0"/><circle cx="359.5" cy="393" r="1.4" fill="#c8c8d0"/><circle cx="372.5" cy="383" r="1.4" fill="#c8c8d0"/><circle cx="372.5" cy="393" r="1.4" fill="#c8c8d0"/><rect x="377.5" y="379.5" width="19" height="17" fill="none" stroke="#ffff00" stroke-width="0.9"/><circle cx="387" cy="388" r="5.3" fill="none" stroke="#ffff00" stroke-width="0.9"/><rect x="384.5" y="386" width="5" height="4" fill="#ffff00"/><rect x="383" y="376.5" width="8" height="2.5" fill="none" stroke="#ffff00" stroke-width="0.8"/><circle cx="380.5" cy="383" r="1.4" fill="#c8c8d0"/><circle cx="380.5" cy="393" r="1.4" fill="#c8c8d0"/><circle cx="393.5" cy="383" r="1.4" fill="#c8c8d0"/><circle cx="393.5" cy="393" r="1.4" fill="#c8c8d0"/><rect x="398.0" y="379.5" width="19" height="17" fill="none" stroke="#ffff00" stroke-width="0.9"/><circle cx="407.5" cy="388" r="5.3" fill="none" stroke="#ffff00" stroke-width="0.9"/><rect x="405.0" y="386" width="5" height="4" fill="#ffff00"/><rect x="403.5" y="376.5" width="8" height="2.5" fill="none" stroke="#ffff00" stroke-width="0.8"/><circle cx="401.0" cy="383" r="1.4" fill="#c8c8d0"/><circle cx="401.0" cy="393" r="1.4" fill="#c8c8d0"/><circle cx="414.0" cy="383" r="1.4" fill="#c8c8d0"/><circle cx="414.0" cy="393" r="1.4" fill="#c8c8d0"/><rect x="314" y="377" width="18" height="18" fill="none" stroke="#ffff00" stroke-width="0.9"/><rect x="321.5" y="382" width="4" height="8" fill="none" stroke="#ffff00" stroke-width="0.8"/><rect x="321" y="374" width="6" height="3" fill="none" stroke="#ffff00" stroke-width="0.8"/><path d="M399,358 h26 v12 h-4 v-2 h-18 v2 h-4 z" fill="none" stroke="#ffff00" stroke-width="0.9"/><rect x="404" y="372" width="6" height="3" fill="none" stroke="#ffff00" stroke-width="0.8"/><rect x="403" y="378" width="9" height="2.5" fill="none" stroke="#ffff00" stroke-width="0.8"/><rect x="427" y="331" width="5" height="19" fill="none" stroke="#ffff00" stroke-width="0.9"/><rect x="427" y="358" width="5" height="15" fill="none" stroke="#ffff00" stroke-width="0.9"/><rect x="341" y="357" width="8" height="3" fill="none" stroke="#ffff00" stroke-width="0.8"/><rect x="375" y="358" width="10" height="3" fill="none" stroke="#ffff00" stroke-width="0.8"/><rect x="383" y="363" width="7" height="2.5" fill="none" stroke="#ff9000" stroke-width="0.8"/><rect x="362" y="350" width="7" height="6" fill="none" stroke="#ffff00" stroke-width="0.8"/><rect x="362" y="357" width="7" height="6" fill="none" stroke="#ffff00" stroke-width="0.8"/><path d="M311,210 V250 Q306,276 311,303 L320,320 L333,302" fill="none" stroke="#508070" stroke-width="0.7"/><circle cx="319.0" cy="129.5" r="1.3" fill="#c8c8d0"/><circle cx="324.45" cy="129.5" r="1.3" fill="#c8c8d0"/><circle cx="329.9" cy="129.5" r="1.3" fill="#c8c8d0"/><circle cx="335.35" cy="129.5" r="1.3" fill="#c8c8d0"/><circle cx="340.8" cy="129.5" r="1.3" fill="#c8c8d0"/><circle cx="346.25" cy="129.5" r="1.3" fill="#c8c8d0"/><circle cx="351.7" cy="129.5" r="1.3" fill="#c8c8d0"/><circle cx="357.15" cy="129.5" r="1.3" fill="#c8c8d0"/><circle cx="362.6" cy="129.5" r="1.3" fill="#c8c8d0"/><circle cx="368.05" cy="129.5" r="1.3" fill="#c8c8d0"/><circle cx="373.5" cy="129.5" r="1.3" fill="#c8c8d0"/><circle cx="378.95" cy="129.5" r="1.3" fill="#c8c8d0"/><circle cx="384.4" cy="129.5" r="1.3" fill="#c8c8d0"/><circle cx="389.85" cy="129.5" r="1.3" fill="#c8c8d0"/><circle cx="395.3" cy="129.5" r="1.3" fill="#c8c8d0"/><circle cx="400.75" cy="129.5" r="1.3" fill="#c8c8d0"/><circle cx="364.8" cy="189.5" r="1.3" fill="#c8c8d0"/><circle cx="370.25" cy="189.5" r="1.3" fill="#c8c8d0"/><circle cx="375.7" cy="189.5" r="1.3" fill="#c8c8d0"/><circle cx="381.15000000000003" cy="189.5" r="1.3" fill="#c8c8d0"/><circle cx="386.6" cy="189.5" r="1.3" fill="#c8c8d0"/><circle cx="392.05" cy="189.5" r="1.3" fill="#c8c8d0"/><circle cx="397.5" cy="189.5" r="1.3" fill="#c8c8d0"/><circle cx="402.95" cy="189.5" r="1.3" fill="#c8c8d0"/><circle cx="408.40000000000003" cy="189.5" r="1.3" fill="#c8c8d0"/><ellipse cx="357.5" cy="230.0" rx="2.5" ry="1.3" fill="#c8c8d0"/><ellipse cx="391" cy="230.0" rx="2.5" ry="1.3" fill="#c8c8d0"/><ellipse cx="357.5" cy="235.45" rx="2.5" ry="1.3" fill="#c8c8d0"/><ellipse cx="391" cy="235.45" rx="2.5" ry="1.3" fill="#c8c8d0"/><ellipse cx="357.5" cy="240.9" rx="2.5" ry="1.3" fill="#c8c8d0"/><ellipse cx="391" cy="240.9" rx="2.5" ry="1.3" fill="#c8c8d0"/><ellipse cx="357.5" cy="246.35" rx="2.5" ry="1.3" fill="#c8c8d0"/><ellipse cx="391" cy="246.35" rx="2.5" ry="1.3" fill="#c8c8d0"/><ellipse cx="357.5" cy="251.8" rx="2.5" ry="1.3" fill="#c8c8d0"/><ellipse cx="391" cy="251.8" rx="2.5" ry="1.3" fill="#c8c8d0"/><ellipse cx="357.5" cy="257.25" rx="2.5" ry="1.3" fill="#c8c8d0"/><ellipse cx="391" cy="257.25" rx="2.5" ry="1.3" fill="#c8c8d0"/><ellipse cx="357.5" cy="262.7" rx="2.5" ry="1.3" fill="#c8c8d0"/><ellipse cx="391" cy="262.7" rx="2.5" ry="1.3" fill="#c8c8d0"/><ellipse cx="357.5" cy="268.15" rx="2.5" ry="1.3" fill="#c8c8d0"/><ellipse cx="391" cy="268.15" rx="2.5" ry="1.3" fill="#c8c8d0"/><ellipse cx="357.5" cy="273.6" rx="2.5" ry="1.3" fill="#c8c8d0"/><ellipse cx="391" cy="273.6" rx="2.5" ry="1.3" fill="#c8c8d0"/><ellipse cx="357.5" cy="279.05" rx="2.5" ry="1.3" fill="#c8c8d0"/><ellipse cx="391" cy="279.05" rx="2.5" ry="1.3" fill="#c8c8d0"/><ellipse cx="357.5" cy="284.5" rx="2.5" ry="1.3" fill="#c8c8d0"/><ellipse cx="391" cy="284.5" rx="2.5" ry="1.3" fill="#c8c8d0"/><ellipse cx="357.5" cy="289.95" rx="2.5" ry="1.3" fill="#c8c8d0"/><ellipse cx="391" cy="289.95" rx="2.5" ry="1.3" fill="#c8c8d0"/><ellipse cx="357.5" cy="295.4" rx="2.5" ry="1.3" fill="#c8c8d0"/><ellipse cx="391" cy="295.4" rx="2.5" ry="1.3" fill="#c8c8d0"/><ellipse cx="357.5" cy="300.85" rx="2.5" ry="1.3" fill="#c8c8d0"/><ellipse cx="391" cy="300.85" rx="2.5" ry="1.3" fill="#c8c8d0"/><ellipse cx="357.5" cy="306.3" rx="2.5" ry="1.3" fill="#c8c8d0"/><ellipse cx="391" cy="306.3" rx="2.5" ry="1.3" fill="#c8c8d0"/><ellipse cx="357.5" cy="311.75" rx="2.5" ry="1.3" fill="#c8c8d0"/><ellipse cx="391" cy="311.75" rx="2.5" ry="1.3" fill="#c8c8d0"/><ellipse cx="357.5" cy="317.2" rx="2.5" ry="1.3" fill="#c8c8d0"/><ellipse cx="391" cy="317.2" rx="2.5" ry="1.3" fill="#c8c8d0"/><ellipse cx="357.5" cy="322.65" rx="2.5" ry="1.3" fill="#c8c8d0"/><ellipse cx="391" cy="322.65" rx="2.5" ry="1.3" fill="#c8c8d0"/><ellipse cx="357.5" cy="328.1" rx="2.5" ry="1.3" fill="#c8c8d0"/><ellipse cx="391" cy="328.1" rx="2.5" ry="1.3" fill="#c8c8d0"/><ellipse cx="357.5" cy="333.55" rx="2.5" ry="1.3" fill="#c8c8d0"/><ellipse cx="391" cy="333.55" rx="2.5" ry="1.3" fill="#c8c8d0"/><ellipse cx="403.6" cy="287.0" rx="2.3" ry="1.2" fill="#c8c8d0"/><ellipse cx="420.3" cy="287.0" rx="2.3" ry="1.2" fill="#c8c8d0"/><ellipse cx="403.6" cy="292.5" rx="2.3" ry="1.2" fill="#c8c8d0"/><ellipse cx="420.3" cy="292.5" rx="2.3" ry="1.2" fill="#c8c8d0"/><ellipse cx="403.6" cy="298.0" rx="2.3" ry="1.2" fill="#c8c8d0"/><ellipse cx="420.3" cy="298.0" rx="2.3" ry="1.2" fill="#c8c8d0"/><ellipse cx="403.6" cy="303.5" rx="2.3" ry="1.2" fill="#c8c8d0"/><ellipse cx="420.3" cy="303.5" rx="2.3" ry="1.2" fill="#c8c8d0"/><ellipse cx="403.6" cy="309.0" rx="2.3" ry="1.2" fill="#c8c8d0"/><ellipse cx="420.3" cy="309.0" rx="2.3" ry="1.2" fill="#c8c8d0"/><ellipse cx="403.6" cy="314.5" rx="2.3" ry="1.2" fill="#c8c8d0"/><ellipse cx="420.3" cy="314.5" rx="2.3" ry="1.2" fill="#c8c8d0"/><ellipse cx="403.6" cy="320.0" rx="2.3" ry="1.2" fill="#c8c8d0"/><ellipse cx="420.3" cy="320.0" rx="2.3" ry="1.2" fill="#c8c8d0"/><ellipse cx="403.6" cy="325.5" rx="2.3" ry="1.2" fill="#c8c8d0"/><ellipse cx="420.3" cy="325.5" rx="2.3" ry="1.2" fill="#c8c8d0"/><ellipse cx="403.6" cy="331.0" rx="2.3" ry="1.2" fill="#c8c8d0"/><ellipse cx="420.3" cy="331.0" rx="2.3" ry="1.2" fill="#c8c8d0"/><ellipse cx="403.6" cy="336.5" rx="2.3" ry="1.2" fill="#c8c8d0"/><ellipse cx="420.3" cy="336.5" rx="2.3" ry="1.2" fill="#c8c8d0"/><ellipse cx="403.6" cy="342.0" rx="2.3" ry="1.2" fill="#c8c8d0"/><ellipse cx="420.3" cy="342.0" rx="2.3" ry="1.2" fill="#c8c8d0"/><ellipse cx="403.6" cy="347.5" rx="2.3" ry="1.2" fill="#c8c8d0"/><ellipse cx="420.3" cy="347.5" rx="2.3" ry="1.2" fill="#c8c8d0"/><ellipse cx="403.6" cy="353.0" rx="2.3" ry="1.2" fill="#c8c8d0"/><ellipse cx="420.3" cy="353.0" rx="2.3" ry="1.2" fill="#c8c8d0"/><circle cx="341" cy="224.5" r="1.2" fill="#c8c8d0"/><circle cx="352.5" cy="224.5" r="1.2" fill="#c8c8d0"/><circle cx="341" cy="230.1" r="1.2" fill="#c8c8d0"/><circle cx="352.5" cy="230.1" r="1.2" fill="#c8c8d0"/><circle cx="341" cy="235.7" r="1.2" fill="#c8c8d0"/><circle cx="352.5" cy="235.7" r="1.2" fill="#c8c8d0"/><circle cx="341" cy="241.3" r="1.2" fill="#c8c8d0"/><circle cx="352.5" cy="241.3" r="1.2" fill="#c8c8d0"/><circle cx="341" cy="246.9" r="1.2" fill="#c8c8d0"/><circle cx="352.5" cy="246.9" r="1.2" fill="#c8c8d0"/><circle cx="400.2" cy="231.5" r="1.3" fill="#c8c8d0"/><circle cx="411.5" cy="231.5" r="1.3" fill="#c8c8d0"/><circle cx="400.2" cy="237.6" r="1.3" fill="#c8c8d0"/><circle cx="411.5" cy="237.6" r="1.3" fill="#c8c8d0"/><circle cx="400.2" cy="243.7" r="1.3" fill="#c8c8d0"/><circle cx="411.5" cy="243.7" r="1.3" fill="#c8c8d0"/><circle cx="400.2" cy="249.8" r="1.3" fill="#c8c8d0"/><circle cx="411.5" cy="249.8" r="1.3" fill="#c8c8d0"/><circle cx="400.2" cy="255.9" r="1.3" fill="#c8c8d0"/><circle cx="411.5" cy="255.9" r="1.3" fill="#c8c8d0"/><circle cx="400.2" cy="262.0" r="1.3" fill="#c8c8d0"/><circle cx="411.5" cy="262.0" r="1.3" fill="#c8c8d0"/><circle cx="400.2" cy="268.1" r="1.3" fill="#c8c8d0"/><circle cx="411.5" cy="268.1" r="1.3" fill="#c8c8d0"/><circle cx="400.2" cy="274.2" r="1.3" fill="#c8c8d0"/><circle cx="411.5" cy="274.2" r="1.3" fill="#c8c8d0"/><circle cx="315.5" cy="203.5" r="1.2" fill="#c8c8d0"/><circle cx="321.5" cy="203.5" r="1.2" fill="#c8c8d0"/><circle cx="328" cy="203.5" r="1.2" fill="#c8c8d0"/><circle cx="334" cy="203.5" r="1.2" fill="#c8c8d0"/><circle cx="340.6" cy="203.5" r="1.2" fill="#c8c8d0"/><circle cx="346.6" cy="203.5" r="1.2" fill="#c8c8d0"/><circle cx="353.1" cy="203.5" r="1.2" fill="#c8c8d0"/><circle cx="359.1" cy="203.5" r="1.2" fill="#c8c8d0"/><circle cx="365.6" cy="203.5" r="1.2" fill="#c8c8d0"/><circle cx="371.6" cy="203.5" r="1.2" fill="#c8c8d0"/><circle cx="378.1" cy="203.5" r="1.2" fill="#c8c8d0"/><circle cx="384.1" cy="203.5" r="1.2" fill="#c8c8d0"/><circle cx="390.6" cy="203.5" r="1.2" fill="#c8c8d0"/><circle cx="396.6" cy="203.5" r="1.2" fill="#c8c8d0"/><circle cx="403.1" cy="203.5" r="1.2" fill="#c8c8d0"/><circle cx="409.1" cy="203.5" r="1.2" fill="#c8c8d0"/><circle cx="307.5" cy="265" r="1.2" fill="#c8c8d0"/><circle cx="307.5" cy="271" r="1.2" fill="#c8c8d0"/><circle cx="307.5" cy="277" r="1.2" fill="#c8c8d0"/><circle cx="307.5" cy="283" r="1.2" fill="#c8c8d0"/><circle cx="307.5" cy="289" r="1.2" fill="#c8c8d0"/><circle cx="314" cy="268" r="1.2" fill="#c8c8d0"/><circle cx="314" cy="274" r="1.2" fill="#c8c8d0"/><circle cx="314" cy="280" r="1.2" fill="#c8c8d0"/><circle cx="314" cy="286" r="1.2" fill="#c8c8d0"/><circle cx="310.5" cy="250.5" r="3.5" fill="#d8dce0"/><circle cx="310.5" cy="303.5" r="4" fill="#d8dce0"/><circle cx="320" cy="320" r="3.3" fill="#d8dce0"/><circle cx="320" cy="350" r="3.3" fill="#d8dce0"/><circle cx="305.5" cy="148" r="1.4" fill="#c8c8d0"/><circle cx="311.3" cy="148" r="1.4" fill="#c8c8d0"/><circle cx="305.5" cy="160.5" r="1.4" fill="#c8c8d0"/><circle cx="311.3" cy="160.5" r="1.4" fill="#c8c8d0"/><circle cx="305.5" cy="173.5" r="1.4" fill="#c8c8d0"/><circle cx="311.3" cy="173.5" r="1.4" fill="#c8c8d0"/><circle cx="305.5" cy="186.5" r="1.4" fill="#c8c8d0"/><circle cx="311.3" cy="186.5" r="1.4" fill="#c8c8d0"/><circle cx="304.4" cy="224.6" r="1.3" fill="#c8c8d0"/><circle cx="319.6" cy="224.6" r="1.3" fill="#c8c8d0"/><circle cx="335" cy="226.5" r="1.3" fill="#c8c8d0"/><circle cx="335" cy="232.5" r="1.3" fill="#c8c8d0"/><circle cx="335" cy="238" r="1.3" fill="#c8c8d0"/><circle cx="322" cy="238" r="1.3" fill="#c8c8d0"/><circle cx="322" cy="244" r="1.3" fill="#c8c8d0"/><circle cx="329" cy="244" r="1.3" fill="#c8c8d0"/><circle cx="335" cy="244" r="1.3" fill="#c8c8d0"/><circle cx="329" cy="255.5" r="1.3" fill="#c8c8d0"/><circle cx="335" cy="255.5" r="1.3" fill="#c8c8d0"/><circle cx="335" cy="262" r="1.3" fill="#c8c8d0"/><circle cx="335" cy="268" r="1.3" fill="#c8c8d0"/><circle cx="335" cy="274" r="1.3" fill="#c8c8d0"/><circle cx="335" cy="287" r="1.3" fill="#c8c8d0"/><circle cx="335" cy="293" r="1.3" fill="#c8c8d0"/><circle cx="335" cy="299" r="1.3" fill="#c8c8d0"/><circle cx="430" cy="141" r="1.3" fill="#c8c8d0"/><circle cx="429.5" cy="152" r="1.3" fill="#c8c8d0"/><circle cx="430" cy="158.7" r="1.3" fill="#c8c8d0"/><circle cx="429" cy="170" r="1.3" fill="#c8c8d0"/><circle cx="418.3" cy="169" r="1.3" fill="#c8c8d0"/><circle cx="409" cy="134" r="1.3" fill="#c8c8d0"/><circle cx="430" cy="179.5" r="1.3" fill="#c8c8d0"/><circle cx="430" cy="184" r="1.3" fill="#c8c8d0"/><circle cx="430" cy="189.5" r="1.3" fill="#c8c8d0"/><circle cx="427" cy="217" r="1.3" fill="#c8c8d0"/><circle cx="431" cy="227" r="1.3" fill="#c8c8d0"/><circle cx="392" cy="227" r="1.3" fill="#c8c8d0"/><circle cx="302" cy="328" r="1.3" fill="#c8c8d0"/><circle cx="327" cy="328" r="1.3" fill="#c8c8d0"/><circle cx="327" cy="333" r="1.3" fill="#c8c8d0"/><circle cx="327" cy="338" r="1.3" fill="#c8c8d0"/><circle cx="327" cy="343" r="1.3" fill="#c8c8d0"/><circle cx="302.5" cy="361" r="1.3" fill="#c8c8d0"/><circle cx="302.5" cy="372" r="1.3" fill="#c8c8d0"/><circle cx="308" cy="356" r="1.3" fill="#c8c8d0"/><circle cx="308" cy="372" r="1.3" fill="#c8c8d0"/><circle cx="405" cy="364" r="1.3" fill="#c8c8d0"/><circle cx="411" cy="364" r="1.3" fill="#c8c8d0"/><circle cx="416" cy="364" r="1.3" fill="#c8c8d0"/><circle cx="360" cy="356.5" r="1.3" fill="#c8c8d0"/><circle cx="372" cy="356.5" r="1.3" fill="#c8c8d0"/><circle cx="360" cy="362" r="1.3" fill="#c8c8d0"/><circle cx="372" cy="362" r="1.3" fill="#c8c8d0"/><circle cx="430" cy="313.5" r="1.3" fill="#c8c8d0"/><circle cx="420" cy="313.5" r="1.3" fill="#c8c8d0"/><circle cx="302" cy="198" r="1.3" fill="#c8c8d0"/><circle cx="302" cy="207" r="1.3" fill="#c8c8d0"/><circle cx="311" cy="210" r="1.3" fill="#c8c8d0"/><circle cx="317.5" cy="381" r="1.3" fill="#c8c8d0"/><circle cx="329" cy="381" r="1.3" fill="#c8c8d0"/><circle cx="317.5" cy="391.5" r="1.3" fill="#c8c8d0"/><circle cx="329" cy="391.5" r="1.3" fill="#c8c8d0"/><circle cx="317.5" cy="386" r="1.3" fill="#c8c8d0"/><circle cx="329" cy="386" r="1.3" fill="#c8c8d0"/><rect x="297.5" y="124.4" width="136.3" height="271.3" fill="none" stroke="#a02cd0" stroke-width="1.2"/><circle cx="305.1" cy="131.7" r="4.8" fill="none" stroke="#a02cd0" stroke-width="1"/><circle cx="425.1" cy="132" r="4.8" fill="none" stroke="#a02cd0" stroke-width="1"/><circle cx="305" cy="387.5" r="4.8" fill="none" stroke="#a02cd0" stroke-width="1"/><circle cx="425.3" cy="387.7" r="4.8" fill="none" stroke="#a02cd0" stroke-width="1"/></g></svg><!--/PCB-->
<!-- scrollbars -->
<div class="a" style="left:656px;top:72px;width:12px;height:387px;background:linear-gradient(90deg,#f3f1ec,#fefefd)"></div>
<div class="xb" style="left:657px;top:72px;width:10px;height:11px"></div>
<div class="xb" style="left:657px;top:189px;width:10px;height:11px"></div>
<div class="xb" style="left:657px;top:448px;width:10px;height:11px"></div>
<div class="a" style="left:123px;top:459px;width:533px;height:12px;background:linear-gradient(#f3f1ec,#fefefd)"></div>
<div class="xb" style="left:123px;top:460px;width:11px;height:10px"></div>
<div class="xb" style="left:454px;top:460px;width:12px;height:10px"></div>
<div class="xb" style="left:644px;top:460px;width:11px;height:10px"></div>
<div class="a" style="left:656px;top:459px;width:14px;height:13px;background:#ECE9D8"></div>
<svg class="a" style="left:0;top:0" width="708" height="478">
<path d="M659.5,79.5 l2.5,-2.5 l2.5,2.5" stroke="#4d6185" stroke-width="1.4" fill="none"/>
<path d="M659.5,451.5 l2.5,2.5 l2.5,-2.5" stroke="#4d6185" stroke-width="1.4" fill="none"/>
<path d="M659.5,193 h5 M659.5,195 h5 M659.5,197 h5" stroke="#8ea3d8" stroke-width="0.8"/>
<path d="M129.5,462.5 l-2.5,2.5 l2.5,2.5" stroke="#4d6185" stroke-width="1.4" fill="none"/>
<path d="M648,462.5 l2.5,2.5 l-2.5,2.5" stroke="#4d6185" stroke-width="1.4" fill="none"/>
<path d="M458,462.5 v5 M460,462.5 v5 M462,462.5 v5" stroke="#8ea3d8" stroke-width="0.8"/>
<path d="M96,226 l2.5,-2.5 l2.5,2.5" stroke="#4d6185" stroke-width="1.3" fill="none"/>
<path d="M96,285 l2.5,2.5 l2.5,-2.5" stroke="#4d6185" stroke-width="1.3" fill="none"/>
<path d="M96,261 h5 M96,263 h5 M96,265 h5" stroke="#8ea3d8" stroke-width="0.8"/>
<!-- mouse cursor -->
<path d="M296.5,278.5 v11.5 l2.6,-2.5 l1.8,4 l1.7,-0.8 l-1.8,-3.9 h3.6 z" fill="#fff" stroke="#000" stroke-width="0.8"/>
</svg>
<!-- status bar -->
<div class="a" style="left:120px;top:471px;width:550px;height:1px;background:#fff"></div>
<div class="a" style="left:120px;top:474px;width:548px;height:1px;background:#716f64"></div>
<div class="a" style="left:123px;top:476px;width:5px;height:3px;border:1px solid #404040;border-bottom:none;background:#fff"></div>
<div class="a" style="left:168px;top:475px;width:48px;height:4px;border:1px solid #404040;border-bottom:none"></div>
<div class="a" style="left:264px;top:475px;width:1px;height:3px;background:#808080"></div>
<div class="a" style="left:313px;top:475px;width:1px;height:3px;background:#808080"></div>
<div class="a" style="left:357px;top:475px;width:1px;height:3px;background:#808080"></div>
<div class="a" style="left:411px;top:475px;width:1px;height:3px;background:#808080"></div>
<div class="a" style="left:450px;top:475px;width:1px;height:3px;background:#808080"></div>
<div class="a" style="left:120px;top:476px;width:340px;height:2px;overflow:hidden">
<div class="t" style="left:13px;top:0;font-size:9px;font-weight:bold;color:#303030;line-height:9px">Systems</div>
<div class="t" style="left:50px;top:0;font-size:9px;font-weight:bold;color:#303030;line-height:9px">Bottom Layer</div>
<div class="t" style="left:99px;top:0;font-size:9px;color:#303030;line-height:9px">Mechanical4</div>
<div class="t" style="left:147px;top:0;font-size:9px;color:#303030;line-height:9px">Mechanical1</div>
<div class="t" style="left:196px;top:0;font-size:9px;font-weight:bold;color:#303030;line-height:9px">TopOverlay</div>
<div class="t" style="left:240px;top:0;font-size:9px;color:#303030;line-height:9px">KeepOutLayer</div>
<div class="t" style="left:294px;top:0;font-size:9px;color:#303030;line-height:9px">MultiLayer</div>
</div>

<!--RT--><svg class="a" style="left:0;top:0" width="708" height="478"><path d="M675.5,54.5 h14 M693.5,54.5 h14" stroke="#fff" stroke-width="1"/><path d="M675.5,55.5 h14 M693.5,55.5 h14" stroke="#c8c4b4" stroke-width="1"/><path d="M678.5,72.5 v-8 h4" stroke="#901010" stroke-width="1.6" fill="none"/><path d="M682,62.5 l2,2 l-2,2 z" fill="#901010"/><path d="M679,73.5 l8,-9" stroke="#f0f060" stroke-width="1"/><path d="M689,62 l-2.5,2.5 l2.5,2.5" stroke="#000" stroke-width="1.1" fill="none"/><path d="M676.5,80 h6 l2.5,2.5 h4.5 M676.5,83 h6 l2.5,2.5 h4.5" stroke="#3030a0" stroke-width="1.1" fill="none"/><circle cx="682.5" cy="98" r="3.2" fill="#b0b0c0" stroke="#404050" stroke-width="1"/><circle cx="682.5" cy="98" r="1.4" fill="#1010d0"/><path d="M680.5,113 v5" stroke="#b01010" stroke-width="1.5"/><circle cx="680.5" cy="112" r="2" fill="#202020"/><path d="M682,112 h6" stroke="#2020a0" stroke-width="1.8"/><text x="677.5" y="133.5" font-family="Liberation Serif" font-size="13" fill="#101010">T</text><path d="M676,146.5 h3.5 M677.8,144.8 v3.5" stroke="#202020" stroke-width="1"/><text x="680" y="145" font-family="Liberation Sans" font-size="5.5" font-weight="bold" fill="#202020">00,0</text><path d="M677,165 l11,-11" stroke="#303030" stroke-width="0.9" stroke-dasharray="2,1.2"/><rect x="680.5" y="157.5" width="3.5" height="3.5" transform="rotate(-45 682.2 159.2)" fill="#f0f0e8" stroke="#303030" stroke-width=".8"/><circle cx="682.5" cy="174" r="4.3" fill="none" stroke="#808078" stroke-width="0.9"/><path d="M679.5,171 l6,6 M685.5,171 l-6,6" stroke="#808078" stroke-width="0.9"/><rect x="678" y="169.5" width="9" height="9" fill="none" stroke="#a8a498" stroke-width=".5"/><rect x="677.5" y="184.5" width="10.5" height="10.5" fill="#e4e2d8" stroke="#909088" stroke-width="1"/><path d="M678,190 l5,-5 M678,194 l9,-9 M682,194.5 l5.5,-5.5" stroke="#a0a098" stroke-width="0.9"/><rect x="680" y="209" width="6" height="9.5" fill="#f0f090" stroke="#c0c040" stroke-width=".8"/><rect x="678" y="210" width="1.3" height="1" fill="#202020"/><rect x="686.8" y="210" width="1.3" height="1" fill="#202020"/><rect x="678" y="212.5" width="1.3" height="1" fill="#202020"/><rect x="686.8" y="212.5" width="1.3" height="1" fill="#202020"/><rect x="678" y="215" width="1.3" height="1" fill="#202020"/><rect x="686.8" y="215" width="1.3" height="1" fill="#202020"/><rect x="678" y="217.5" width="1.3" height="1" fill="#202020"/><rect x="686.8" y="217.5" width="1.3" height="1" fill="#202020"/><path d="M687,229 A5,5 0 1 0 682,234" fill="none" stroke="#3030d0" stroke-width="1.1"/><path d="M679.5,233 l2.5,1 l0,-2.5" stroke="#3030d0" stroke-width=".8" fill="none"/><path d="M683,228 l-1,1.5" stroke="#505050" stroke-width=".6"/><path d="M678,248 A5,5 0 1 1 687,243" fill="none" stroke="#3030d0" stroke-width="1.1"/><path d="M681,244 l2,1 M682,243 l0,3" stroke="#202020" stroke-width=".7"/><path d="M678.5,263 A5,5 0 1 1 686.5,262" fill="none" stroke="#3030d0" stroke-width="1.1"/><path d="M680,263 l3,-6 M683,257 l3,5" stroke="#202020" stroke-width=".7"/><circle cx="682.5" cy="275" r="4.6" fill="none" stroke="#3030d0" stroke-width="1.1"/><path d="M680,278 l4,-5" stroke="#202020" stroke-width=".7"/><rect x="678" y="285" width="9.5" height="9.5" fill="#e0e070" stroke="#404020" stroke-width="1"/><path d="M677.5,309 v-3.5 h4 l6,-5 v8.5 z" fill="#e0e070" stroke="#303010" stroke-width="1"/><path d="M677.5,316 h10.5 v8.5 h-10.5 v-3 h3 l5,-3 h-8 z" fill="#e0e070" stroke="#303010" stroke-width="1"/><text x="677.5" y="336.5" font-family="Liberation Mono" font-size="5.8" font-weight="bold" fill="#202020" letter-spacing="-.6">000</text><text x="677.5" y="341.5" font-family="Liberation Mono" font-size="5.8" font-weight="bold" fill="#202020" letter-spacing="-.6">000</text><path d="M697.5,63 v9" stroke="#101010" stroke-width="1.3"/><rect x="699" y="63.5" width="4" height="2.5" fill="none" stroke="#404040" stroke-width=".8"/><rect x="699" y="66.5" width="6" height="3" fill="none" stroke="#404040" stroke-width=".8"/><path d="M699,71 h5" stroke="#2020c0" stroke-width="1"/><rect x="695.5" y="77.5" width="3" height="2.5" fill="none" stroke="#303030" stroke-width=".8"/><path d="M699,78.5 h4" stroke="#2020c0" stroke-width="1.2"/><rect x="697.5" y="81" width="7" height="3" fill="none" stroke="#303030" stroke-width=".8"/><path d="M696,86.5 h3" stroke="#2020c0" stroke-width="1.2"/><rect x="700" y="85" width="6" height="3" fill="none" stroke="#303030" stroke-width=".8"/><rect x="696" y="95" width="6" height="5" fill="#c0c0b8" stroke="#404040" stroke-width=".8"/><rect x="699" y="93" width="3" height="2" fill="none" stroke="#404040" stroke-width=".7"/><path d="M704.5,92.5 v10" stroke="#101010" stroke-width="1.3"/><path d="M697,101.5 h5" stroke="#2020c0" stroke-width="1"/><ellipse cx="696.5" cy="113" rx="1.3" ry="2.2" fill="none" stroke="#202020" stroke-width=".9"/><rect x="699" y="110" width="3" height="6" fill="none" stroke="#202020" stroke-width=".9"/><ellipse cx="705" cy="113" rx="2" ry="1.5" fill="none" stroke="#202020" stroke-width=".9"/><path d="M695.5,122.5 q1.5,0 1.5,2.5 q0,2.5 -1.5,2.5 M699.5,122.5 q-1.5,0 -1.5,2.5 q0,2.5 1.5,2.5" stroke="#202020" stroke-width=".9" fill="none"/><rect x="700.5" y="123" width="2" height="4.5" fill="none" stroke="#202020" stroke-width=".8"/><path d="M706.5,123.5 q-2,0 -2,2 q0,2 2,2" stroke="#202020" stroke-width=".9" fill="none"/><path d="M695,130.5 h4.5 M702.5,130.5 h4.5" stroke="#2020c0" stroke-width="1"/><path d="M694.5,130.5 l2,-1.5 v3 z M707.5,130.5 l-2,-1.5 v3 z" fill="#2020c0"/><rect x="695" y="139" width="2.6" height="5" fill="none" stroke="#202020" stroke-width="1"/><rect x="698.8" y="138.5" width="3" height="6" fill="#f0f0e8" stroke="#202020" stroke-width="1"/><ellipse cx="704.8" cy="141.5" rx="1.8" ry="2" fill="none" stroke="#202020" stroke-width="1"/><path d="M695,147 h4 M703,147 h4" stroke="#2020c0" stroke-width="1"/><path d="M700,147 l-2,-1.5 v3 z M702,147 l2,-1.5 v3 z" fill="#2020c0"/><path d="M696,163.5 h10" stroke="#101010" stroke-width="1.4"/><rect x="697" y="165" width="3" height="6" fill="none" stroke="#404040" stroke-width=".8"/><rect x="701" y="165" width="3" height="5" fill="#a0a0e0" stroke="#404040" stroke-width=".8"/><rect x="695.5" y="184" width="2.5" height="2.5" fill="none" stroke="#202020" stroke-width=".9"/><path d="M696.5,177 v4 M704.5,182 v4" stroke="#2020c0" stroke-width="1.2"/><rect x="699" y="179" width="3" height="5" fill="none" stroke="#404040" stroke-width=".8"/><rect x="703" y="177" width="3" height="5" fill="none" stroke="#404040" stroke-width=".8"/><rect x="697" y="195" width="3" height="6" fill="none" stroke="#404040" stroke-width=".8"/><rect x="701" y="193" width="3" height="8" fill="#c0c0b8" stroke="#404040" stroke-width=".8"/><path d="M696,202 h10" stroke="#101010" stroke-width="1.4"/><rect x="699.5" y="208.5" width="3" height="2" fill="none" stroke="#303030" stroke-width=".8"/><rect x="698" y="211.5" width="6" height="3" fill="none" stroke="#303030" stroke-width=".8"/><rect x="699.5" y="215.5" width="3" height="2" fill="none" stroke="#303030" stroke-width=".8"/><text x="695" y="231" font-family="Liberation Sans" font-size="7" font-weight="bold" fill="#202020">}{</text><path d="M704.5,225 v3 M704.5,231 v3" stroke="#2020c0" stroke-width="1.3"/><rect x="697" y="239.5" width="3" height="2.5" fill="none" stroke="#202020" stroke-width=".8"/><rect x="696" y="242.5" width="5" height="3.5" fill="#f0f0e8" stroke="#202020" stroke-width=".9"/><rect x="697" y="246.5" width="3" height="2.5" fill="none" stroke="#202020" stroke-width=".8"/><path d="M704.5,240 v3 M704.5,245 v3" stroke="#2020c0" stroke-width="1.3"/><rect x="695" y="262" width="12" height="11" fill="#e8e6dc" stroke="#808078" stroke-width=".8"/><rect x="696.5" y="264" width="3.5" height="3" fill="none" stroke="#303030" stroke-width=".8"/><rect x="696.5" y="268.5" width="3.5" height="3" fill="none" stroke="#303030" stroke-width=".8"/><rect x="701.5" y="264" width="3.5" height="7.5" fill="none" stroke="#909090" stroke-width=".8"/><rect x="695" y="278" width="12" height="11" fill="#e8e6dc" stroke="#909088" stroke-width=".8" stroke-dasharray="1,1"/><rect x="697" y="280" width="3.5" height="3" fill="none" stroke="#303030" stroke-width=".8"/><rect x="697" y="284" width="3.5" height="3" fill="none" stroke="#303030" stroke-width=".8"/><rect x="702" y="280" width="3" height="7" fill="none" stroke="#909090" stroke-width=".8"/><path d="M697,292 v12 M705,292 v12 M695,294 h12 M695,302 h12" stroke="#909088" stroke-width=".7"/><rect x="698" y="295" width="6" height="6" fill="#fff" stroke="#303030" stroke-width="1"/><path d="M695.5,296 l2,1.5 l-2,1.5" fill="#2020c0"/><path d="M700,292.5 l1,2 l1,-2" fill="#2020c0"/><rect x="695" y="307" width="12" height="12" fill="#f2f0e8" stroke="#606058" stroke-width=".8"/><rect x="698" y="308.5" width="6" height="3.5" fill="#e8e870" stroke="#202020" stroke-width=".8"/><rect x="698" y="314" width="6" height="3.5" fill="#e8e870" stroke="#202020" stroke-width=".8"/><rect x="695" y="323" width="12" height="11.5" fill="#f2f0e8" stroke="#606058" stroke-width=".8"/><rect x="699" y="326.5" width="5" height="5" fill="#e8e870" stroke="#202020" stroke-width=".8"/><path d="M697,329 h2 M704,329 h2" stroke="#202020" stroke-width="1"/><rect x="697.5" y="341.5" width="9.5" height="8.5" fill="#e8e8f0" stroke="#202040" stroke-width="1"/><rect x="697.5" y="341.5" width="9.5" height="2" fill="#2040a0"/><path d="M699.5,346 h5 M699.5,348 h3" stroke="#404060" stroke-width=".9"/><path d="M693.5,337 l3.5,3.5 M697,337 l-3.5,3.5 M695.2,336.5 v5 M693,338.8 h4.5" stroke="#d8e040" stroke-width=".7"/></svg><!--/RT-->
</body></html>
